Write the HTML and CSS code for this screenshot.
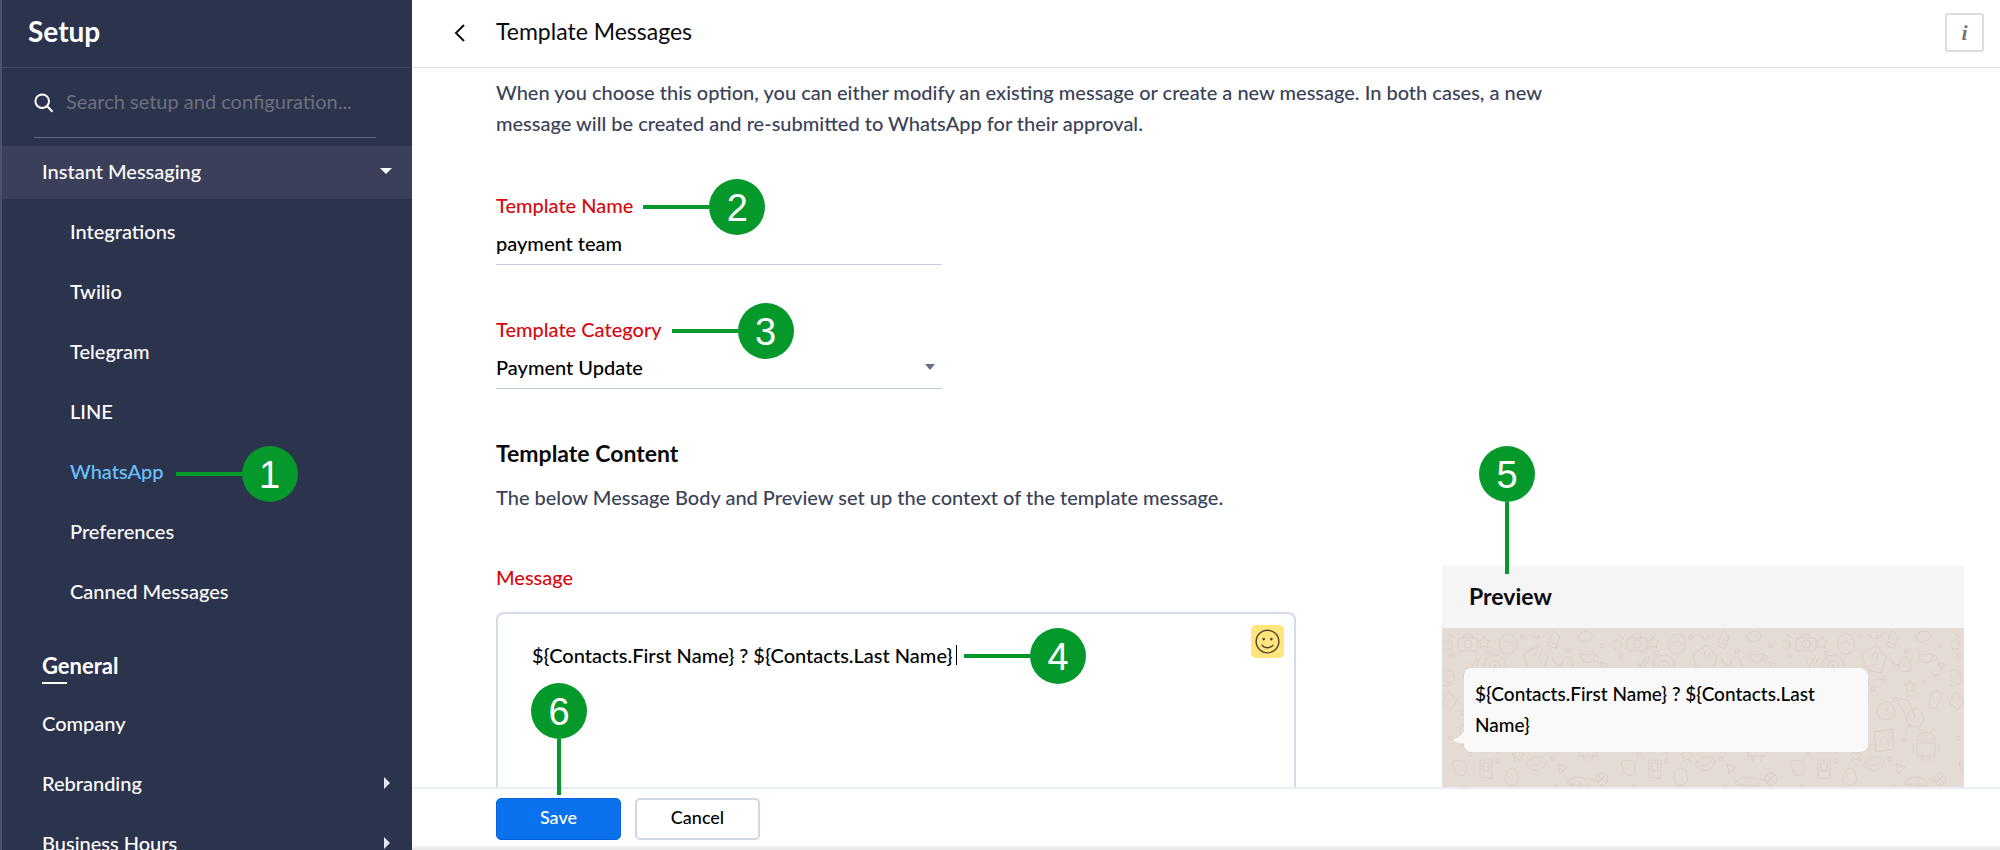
FILE: index.html
```html
<!DOCTYPE html>
<html lang="en">
<head>
<meta charset="utf-8">
<title>Setup - Template Messages</title>
<link rel="stylesheet" href="styles.css">
</head>
<body>
<div class="app">
  <aside class="sidebar">
    <div class="sidebar-head"><h1 class="brand">Setup</h1></div>
    <label class="search">
      <svg class="search-icon" viewBox="0 0 20 20" aria-hidden="true"><circle cx="8.200" cy="8.200" r="6.800"/><path d="M13 13l5.500 5.800"/></svg>
      <input class="search-input" type="search" placeholder="Search setup and configuration..." aria-label="Search setup and configuration">
    </label>
    <nav class="nav" aria-label="Setup">
      <a class="nav-parent" href="#im">Instant Messaging<svg class="arrow-down" viewBox="0 0 12 6" aria-hidden="true"><path d="M0 0h12L6 6z"/></svg></a>
      <ul class="nav-list nav-sub">
        <li><a class="nav-link" href="#integrations">Integrations</a></li>
        <li><a class="nav-link" href="#twilio">Twilio</a></li>
        <li><a class="nav-link" href="#telegram">Telegram</a></li>
        <li><a class="nav-link" href="#line">LINE</a></li>
        <li><a class="nav-link nav-active" href="#whatsapp"><span class="anchor">WhatsApp<span class="callout callout-side callout-nav"><span class="callout-line"></span><span class="callout-dot">1</span></span></span></a></li>
        <li><a class="nav-link" href="#preferences">Preferences</a></li>
        <li><a class="nav-link" href="#canned">Canned Messages</a></li>
      </ul>
      <h2 class="nav-title">General</h2>
      <ul class="nav-list">
        <li><a class="nav-link" href="#company">Company</a></li>
        <li><a class="nav-link" href="#rebranding">Rebranding<svg class="arrow-right" viewBox="0 0 6 12" aria-hidden="true"><path d="M0 0v12l6-6z"/></svg></a></li>
        <li><a class="nav-link" href="#hours">Business Hours<svg class="arrow-right" viewBox="0 0 6 12" aria-hidden="true"><path d="M0 0v12l6-6z"/></svg></a></li>
      </ul>
    </nav>
  </aside>

  <div class="main">
    <header class="topbar">
      <button class="back" type="button" aria-label="Back"><svg viewBox="0 0 12 18" aria-hidden="true"><path d="M10 1L2 9l8 8"/></svg></button>
      <h2 class="page-title">Template Messages</h2>
      <button class="info" type="button" aria-label="Information">i</button>
    </header>

    <main class="content">
      <p class="intro">When you choose this option, you can either modify an existing message or create a new message. In both cases, a new message will be created and re-submitted to WhatsApp for their approval.</p>

      <div class="field">
        <label class="label anchor" for="name">Template Name<span class="callout callout-side callout-name"><span class="callout-line"></span><span class="callout-dot">2</span></span></label>
        <input class="control" id="name" type="text" value="payment team">
      </div>
      <div class="field">
        <label class="label anchor" for="category">Template Category<span class="callout callout-side callout-category"><span class="callout-line"></span><span class="callout-dot">3</span></span></label>
        <div class="select-wrap">
          <select class="control" id="category"><option>Payment Update</option></select>
          <svg class="select-arrow" viewBox="0 0 10 6" aria-hidden="true"><path d="M0 0h10L5 6z"/></svg>
        </div>
      </div>

      <h3 class="section-title">Template Content</h3>
      <p class="section-text">The below Message Body and Preview set up the context of the template message.</p>

      <div class="editor-row">
        <div class="editor">
          <label class="label" for="message">Message</label>
          <div class="editor-box">
            <textarea class="message" id="message">${Contacts.First Name} ? ${Contacts.Last Name}</textarea>
            <span class="caret"></span>
            <button class="emoji" type="button" aria-label="Insert emoji"><svg viewBox="0 0 26 26" aria-hidden="true"><circle cx="13" cy="13" r="11.800"/><path d="M7 16.500c3 4 9 4 12 0"/><circle class="eye" cx="9" cy="10.500" r="1.400"/><circle class="eye" cx="17" cy="10.500" r="1.400"/></svg></button>
            <span class="callout callout-side callout-message"><span class="callout-line"></span><span class="callout-dot">4</span></span>
          </div>
        </div>
        <section class="preview">
          <span class="callout callout-down callout-preview"><span class="callout-dot">5</span><span class="callout-line"></span></span>
          <h3 class="preview-title">Preview</h3>
          <div class="chat">
            <svg class="doodles" aria-hidden="true">
              <defs><pattern id="doodle" width="169" height="169" patternUnits="userSpaceOnUse">
                <rect x="16" y="10" width="20" height="13" rx="3"/><circle cx="26" cy="16" r="4"/><path d="M21 10l2-4h6l2 4"/>
                <path d="M82 26l14-9 10 12-5 16-15-3zM92 29l3-6M96 31l3-7"/>
                <circle cx="53" cy="38" r="11"/><circle cx="53" cy="38" r="5"/><circle cx="53" cy="38" r="1"/>
                <path d="M58 12c3-8 14-8 16 0s-3 15-9 14-8-6-7-14zM61 16c4-5 8-3 10 2"/>
                <path d="M112 3l6 5-4 13-8-4zM108 14l7 3"/>
                <path d="M136 8c2-5 12-7 14-1s-9 8-12 6z"/>
                <path d="M138 26h15c0 10-12 13-15 0zM153 28c6-1 5 6-2 5"/>
                <path d="M120 35c0-8 10-8 10 0 3 5-1 9-5 9s-8-4-5-9z"/>
                <path d="M4 42a8 8 0 1 0 1 0zM1 48h2M7 48h2M2 53c2 2 5 2 7 0"/>
                <path d="M6 64l9 8-6 10-9-7zM22 60l10-5 5 9-10 5z"/>
                <path d="M51 68c2-6 9-7 12-2l-3 9c-4 2-8-1-9-7zM74 62l5 10 10 2-8 7 2 10"/>
                <circle cx="106" cy="83" r="9"/><circle cx="135" cy="90" r="9"/><path d="M106 83l9-14 14 4 6 17M115 69l10 16M127 68h8"/>
                <path d="M151 66c3-6 12-3 10 3l-5 11h-7z"/>
                <path d="M18 97h18v20H18zM22 102h9M22 106h9M22 111h5"/>
                <path d="M94 104l18-3 2 20-18 3zM100 116c2-12 9-8 8 0"/>
                <path d="M137 112c0-10 18-10 18 0zM137 115h18v13h-18zM133 116v9M159 116v9M142 128v6M150 128v6M141 104l-3-4M151 104l3-4"/>
                <path d="M52 102l8 5 9-6-3 10 6 7-11-1-5 9-1-11-9-3 8-3z"/>
                <path d="M10 134c9-5 16 1 14 9s-12 6-14-9zM38 132h12v18H38zM41 135h6v8h-6z"/>
                <path d="M84 136c4-8 18-10 20-2-2 8-13 13-20 2zM88 137c5 1 10 0 13-4"/>
                <path d="M64 147c0-9 12-9 11 0 4 4 1 10-5 10s-9-6-6-10z"/>
                <path d="M116 136l9 3-7 7zM124 156c5-10 22-9 24 2zM148 151l10 2M130 155l2 6M138 154l1 7"/>
                <circle cx="160" cy="151" r="6"/><path d="M156 147l8 8M164 147l-8 8M84 160h22v7H84zM90 163h10"/>
                <path d="M42 8l2 4 4 1-3 3 1 4-4-2-4 2 1-4-3-3 4-1zM130 52l2 4 4 1-3 3 1 4-4-2-4 2 1-4-3-3 4-1zM76 121l2 4 4 1-3 3 1 4-4-2-4 2 1-4-3-3 4-1z"/>
                <path d="M35 29l-6 11M39 29l-6 11M27 34l3 6M104 48v8M100 52h8M42 82v8M38 86h8M84 108v8M80 112h8M126 105l3-8 3 2"/>
                <path d="M88 6c6 8 14 4 17-3M84 52l6 3-5 4zM110 30l5 8 6-3M158 34l7 2-4 6zM6 6l7 5M2 14c4-4 8-2 8 3s-6 6-8 2M150 42l4 6 6-2"/>
                <circle cx="10" cy="28" r="2"/><circle cx="46" cy="25" r="2"/><circle cx="80" cy="9" r="2"/><circle cx="97" cy="8" r="1"/><circle cx="126" cy="23" r="2"/><circle cx="160" cy="18" r="2"/><circle cx="23" cy="49" r="2"/><circle cx="70" cy="51" r="2"/><circle cx="93" cy="61" r="2"/><circle cx="144" cy="54" r="2"/><circle cx="21" cy="85" r="2"/><circle cx="65" cy="90" r="2"/><circle cx="9" cy="110" r="2"/><circle cx="124" cy="112" r="2"/><circle cx="28" cy="126" r="2"/><circle cx="56" cy="133" r="2"/><circle cx="110" cy="131" r="2"/><circle cx="22" cy="160" r="2"/><circle cx="55" cy="161" r="2"/><circle cx="114" cy="158" r="2"/>
              </pattern></defs>
              <rect class="doodle-fill" width="100%" height="100%"/>
            </svg>
            <div class="bubble">${Contacts.First Name} ? ${Contacts.Last Name}<svg class="tail" viewBox="0 0 14 18" aria-hidden="true"><path d="M14 0C11 7 6 12 0 14c4 3 9 4 14 3z"/></svg></div>
          </div>
        </section>
      </div>
    </main>

    <footer class="actions">
      <div class="save-wrap">
        <button class="btn btn-primary" type="submit">Save</button>
        <span class="callout callout-down callout-save"><span class="callout-dot">6</span><span class="callout-line"></span></span>
      </div>
      <button class="btn" type="button">Cancel</button>
    </footer>
  </div>
</div>
</body>
</html>
```

FILE: styles.css
```css
* { box-sizing: border-box; }
body { margin: 0; background: #fff; color: #0b0b0f; font-family: Lato, "Liberation Sans", sans-serif; font-size: 20px; line-height: 32px; font-weight: 500; }
h1, h2, h3, p, ul { margin: 0; padding: 0; }
a { color: inherit; text-decoration: none; }
button, input, select, textarea { font: inherit; color: inherit; }
svg { display: block; }

.app { display: flex; height: 100vh; overflow: hidden; }

.sidebar { flex: 0 0 412px; overflow: hidden; background: #2c334d; color: #fff; border-left: 2px solid #4b526a; }
.sidebar-head { height: 68px; padding: 15px 0 0 26px; border-bottom: 1px solid #434961; }
.brand { font-size: 28px; line-height: 32px; font-weight: 700; }
.search { display: flex; align-items: center; gap: 12px; height: 70px; margin: 0 36px 8px 32px; border-bottom: 1px solid #5f667e; }
.search-icon { width: 20px; height: 20px; fill: none; stroke: #fff; stroke-width: 2; }
.search-input { flex: 1; min-width: 0; padding: 0 0 3px; border: 0; outline: 0; background: none; font-weight: 400; }
.search-input::placeholder { color: #6d707c; opacity: 1; }
.nav-parent { display: flex; align-items: center; justify-content: space-between; height: 53px; padding: 0 20px 3px 40px; background: #3b3f59; }
.arrow-down { width: 12px; height: 6px; fill: #fff; }
.arrow-right { width: 6px; height: 12px; fill: #e4e6f2; }
.nav-list { list-style: none; }
.nav-sub { padding: 2px 0; }
.nav-link { display: flex; align-items: center; justify-content: space-between; height: 60px; padding: 0 22px 0 40px; }
.nav-sub .nav-link { padding-left: 68px; }
.nav-active { color: #67c4ff; }
.nav-title { margin: 27px 40px 9px; font-size: 22px; line-height: 32px; font-weight: 700; }
.nav-title::after { content: ""; display: block; width: 25px; height: 2px; background: #fff; }

.main { flex: 1; min-width: 0; display: flex; flex-direction: column; }
.topbar { flex: none; display: flex; align-items: center; height: 68px; padding: 0 16px 2px 40px; border-bottom: 1px solid #dfe1e3; }
.back { width: 44px; padding: 0; border: 0; background: none; }
.back svg { width: 12px; height: 18px; margin-left: 2px; fill: none; stroke: #111; stroke-width: 2; }
.page-title { flex: 1; padding-bottom: 4px; font-size: 23px; font-weight: 400; }
.info { width: 39px; height: 39px; padding: 0; border: 2px solid #dcdcdc; border-radius: 3px; background: #fff; color: #777; font-family: "Liberation Serif", serif; font-style: italic; font-weight: 700; font-size: 22px; line-height: 32px; }

.content { flex: 1; min-height: 0; overflow: hidden; padding: 9px 36px 0 84px; }
.intro { max-width: 1090px; color: #3a4258; line-height: 31px; }
.field { display: flex; flex-direction: column; align-items: flex-start; width: 446px; margin-bottom: 48px; }
.intro + .field { margin-top: 50px; }
.label { color: #d8080f; line-height: 32px; }
.control { display: block; width: 100%; height: 44px; padding: 0; border: 0; border-bottom: 1px solid #c3cde2; border-radius: 0; outline: 0; background: none; color: #000; appearance: none; }
.select-wrap { display: grid; align-items: center; width: 100%; }
.select-wrap > * { grid-area: 1 / 1; }
.select-arrow { justify-self: end; width: 10px; height: 6px; margin-right: 7px; fill: #66708a; pointer-events: none; }
.section-title { font-size: 23px; line-height: 32px; font-weight: 700; }
.section-text { margin-top: 12px; color: #3a4258; }

.editor-row { display: flex; justify-content: space-between; align-items: flex-start; }
.editor { flex: 0 1 800px; margin-top: 48px; }
.editor-box { position: relative; display: flex; height: 320px; margin-top: 19px; padding: 11px 10px 12px 12px; border: 2px solid #d3dbe9; border-radius: 8px; }
.message { flex: 1; padding: 14px 0 0 22px; border: 0; outline: 0; resize: none; overflow: hidden; background: none; color: #000; }
.caret { position: absolute; left: 458px; top: 31px; width: 1px; height: 20px; background: #000; }
.emoji { width: 33px; height: 33px; padding: 4px; border: 0; border-radius: 5px; background: #ffe57c; }
.emoji svg { width: 25px; height: 25px; fill: none; stroke: #54492f; stroke-width: 1.500; }
.emoji .eye { fill: #54492f; stroke: none; }

.preview { position: relative; flex: 0 1 522px; margin-top: 53px; }
.preview-title { height: 62px; padding: 14px 27px; background: #f5f5f5; font-size: 23px; line-height: 32px; font-weight: 700; }
.chat { position: relative; height: 320px; padding: 40px 96px 0 22px; background: #e4dbd4; }
.doodles { position: absolute; inset: 0; width: 100%; height: 100%; }
.doodles pattern { fill: none; stroke: #d9cfc8; stroke-width: 1; }
.doodle-fill { fill: url(#doodle); }
.bubble { position: relative; padding: 10px 11px 12px; border-radius: 8px; background: #f9f9f9; color: #000; font-size: 19px; line-height: 31px; }
.tail { position: absolute; left: -11px; bottom: 8px; width: 14px; height: 18px; fill: #f9f9f9; }

.actions { position: relative; flex: none; display: flex; gap: 14px; height: 63px; padding: 9px 84px; border-top: 2px solid #e9edf5; background: linear-gradient(#fff 90%, #e6e6e6); }
.save-wrap { position: relative; }
.btn { width: 125px; height: 42px; padding: 0 0 4px; border: 2px solid #d0d8e6; border-radius: 5px; background: #fff; font-size: 18px; color: #000; }
.btn-primary { border: 1px solid #0862dc; background: #0b72ee; color: #fff; }

.anchor { position: relative; }
.callout { position: absolute; display: flex; align-items: center; pointer-events: none; }
.callout-side { left: 100%; top: 50%; translate: 0 -50%; }
.callout-down { flex-direction: column; }
.callout-dot { width: 56px; height: 56px; border-radius: 50%; background: #04992a; color: #fff; font: 38px/58px "Liberation Sans", sans-serif; text-align: center; }
.callout-line { width: 66px; height: 4px; background: #04992a; }
.callout-down .callout-line { width: 4px; height: 72px; }
.callout-nav { margin: 3px 0 0 12px; }
.callout-name { margin: 2px 0 0 10px; }
.callout-category { margin: 2px 0 0 10px; }
.callout-message { left: 466px; top: 42px; }
.callout-preview { left: 37px; top: -120px; }
.callout-save { left: 35px; bottom: 46px; }
.callout-save .callout-line { height: 56px; }
```
